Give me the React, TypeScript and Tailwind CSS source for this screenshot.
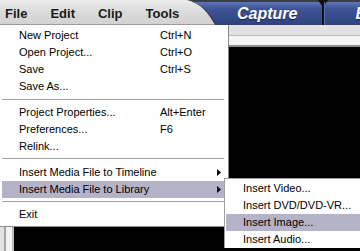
import React from 'react'

const font = { fontFamily: '"Liberation Sans", Arial, sans-serif' }

function Arrow() {
  return (
    <svg width="4" height="7" viewBox="0 0 4 7" className="block">
      <path d="M0 0L4 3.5L0 7Z" fill="#000" />
    </svg>
  )
}

type ItemProps = {
  label: string
  shortcut?: string
  arrow?: boolean
  active?: boolean
}

function MenuItem({ label, shortcut, arrow, active }: ItemProps) {
  return (
    <div
      className={`flex h-[17px] items-center pl-[17px] pr-[3px] ${active ? 'bg-[#b5b3c8]' : ''}`}
    >
      <span className="w-[141px] shrink-0 whitespace-nowrap">{label}</span>
      <span className="whitespace-nowrap">{shortcut}</span>
      {arrow && (
        <span className="ml-auto">
          <Arrow />
        </span>
      )}
    </div>
  )
}

function Separator({ top, bottom }: { top: string; bottom: string }) {
  return <div className={`${top} ${bottom} h-px bg-[#a0a0a0]`} />
}

function TabBar() {
  return (
    <div className="relative flex-1 self-stretch">
      <svg width="175" height="25" viewBox="0 0 175 25" className="absolute inset-0">
        <defs>
          <linearGradient id="tab" x1="0" y1="0" x2="0" y2="1">
            <stop offset="0" stopColor="#6076b8" />
            <stop offset="0.3" stopColor="#3d5396" />
            <stop offset="1" stopColor="#2e437f" />
          </linearGradient>
        </defs>
        <path d="M2 0H175V25H30C24 14 16 3 2 0Z" fill="#3a3d4a" />
        <path d="M7 2H175V25H32C26 15 19 5 7 2Z" fill="url(#tab)" />
        <rect x="137" y="0" width="2" height="25" fill="#101010" />
        <path d="M133 0H143L139 6H137Z" fill="#101010" />
        <rect x="139" y="2" width="1" height="23" fill="#5a6fae" />
      </svg>
      <div className="relative flex h-full items-center pl-[52px] pt-[3px] text-[16px] font-bold italic text-white [text-shadow:0_1px_1px_#1c2650]">
        <span>Capture</span>
        <span className="ml-[58px]">Edit</span>
      </div>
    </div>
  )
}

export default function App() {
  return (
    <div className="relative h-[251px] w-[360px] overflow-hidden bg-black" style={font}>
      {/* menubar */}
      <div className="flex h-[25px] border-b border-[#9c9c9c] bg-linear-to-b from-[#ededed] via-[#dadada] to-[#d2d2d2]">
        <div className="flex w-[185px] shrink-0 items-center gap-[23px] pl-[5px] pt-[4px] text-[13px] font-bold text-[#1a1a1a]">
          <span>File</span>
          <span>Edit</span>
          <span>Clip</span>
          <span>Tools</span>
        </div>
        <TabBar />
      </div>

      {/* work area */}
      <div className="flex h-[226px]">
        <div className="flex w-[14px] shrink-0">
          <div className="w-[4px] bg-[#e2e2e2]" />
          <div className="w-[2px] bg-[#a4a4a4]" />
          <div className="w-[6px] bg-[#f2f2f2]" />
          <div className="w-[2px] bg-[#bcbcbc]" />
        </div>
        <div className="flex flex-1 flex-col">
          <div className="h-[10px] bg-[#e2e2e2]" />
          <div className="h-px bg-[#b8b8b8]" />
          <div className="h-[9px] bg-[#f4f4f4]" />
          <div className="h-[2px] bg-[#8c8c8c]" />
          <div className="flex-1 bg-black" />
        </div>
      </div>

      {/* File menu */}
      <div className="absolute left-0 top-[25px] w-[229px] border-b border-r border-[#8c8c8c] bg-white pb-[3px] pl-[2px] pr-[4px] pt-[2px] text-[11px] text-black">
        <MenuItem label="New Project" shortcut="Ctrl+N" />
        <MenuItem label="Open Project..." shortcut="Ctrl+O" />
        <MenuItem label="Save" shortcut="Ctrl+S" />
        <MenuItem label="Save As..." />
        <Separator top="mt-[4px]" bottom="mb-[4px]" />
        <MenuItem label="Project Properties..." shortcut="Alt+Enter" />
        <MenuItem label="Preferences..." shortcut="F6" />
        <MenuItem label="Relink..." />
        <Separator top="mt-[3px]" bottom="mb-[5px]" />
        <MenuItem label="Insert Media File to Timeline" arrow />
        <MenuItem label="Insert Media File to Library" arrow active />
        <Separator top="mt-[3px]" bottom="mb-[4px]" />
        <MenuItem label="Exit" />
      </div>

      {/* submenu */}
      <div className="absolute left-[224px] top-[178px] w-[150px] border-l border-t border-[#a0a0a0] bg-white pl-px pt-px text-[11px] text-black">
        <MenuItem label="Insert Video..." />
        <MenuItem label="Insert DVD/DVD-VR..." />
        <MenuItem label="Insert Image..." active />
        <MenuItem label="Insert Audio..." />
      </div>
    </div>
  )
}
